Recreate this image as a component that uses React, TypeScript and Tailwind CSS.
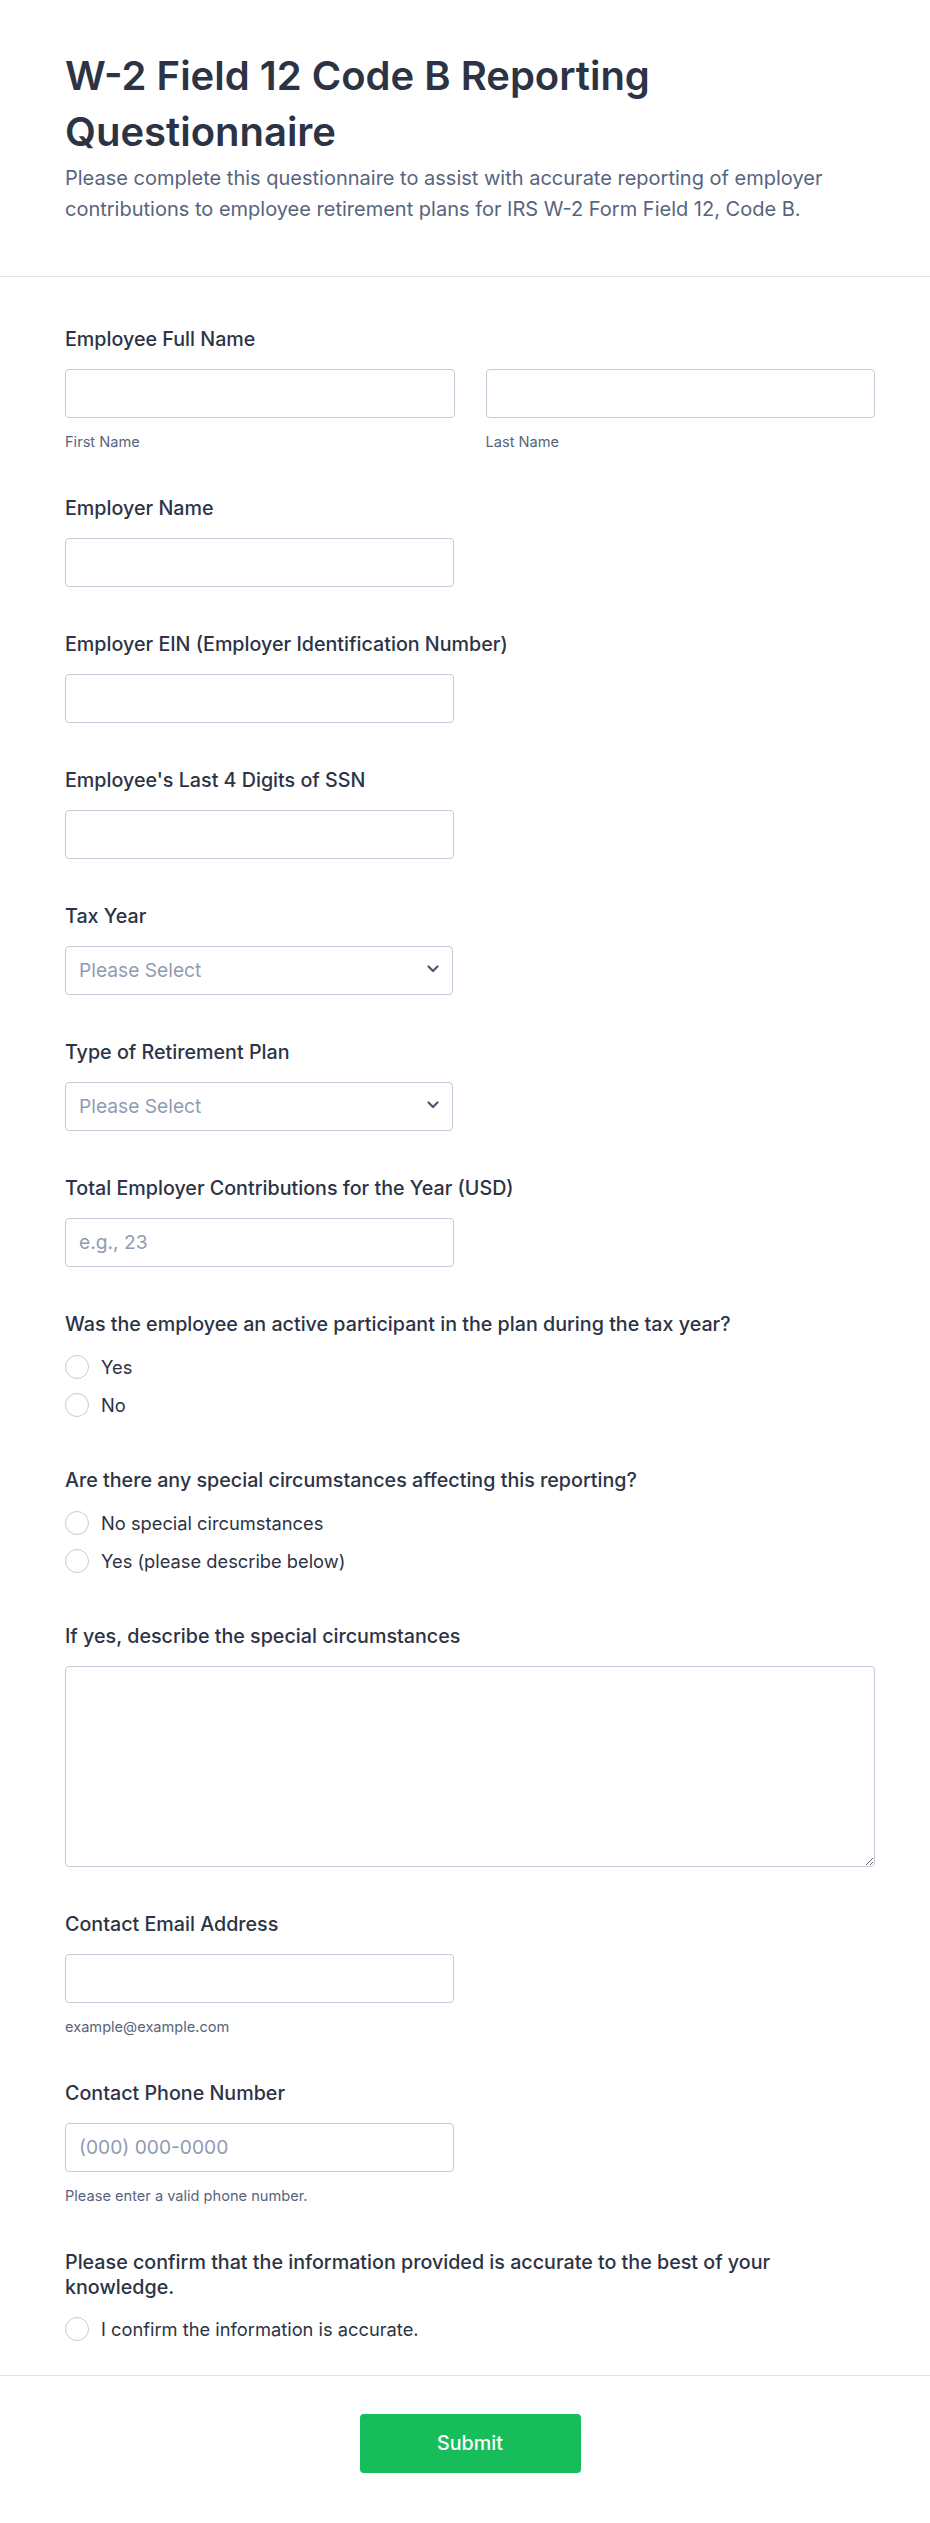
import React from "react";

const labelCls =
  "block text-[19.7px] leading-[24.5px] font-medium text-[#2c3345]";
const inputCls =
  "block h-[49px] rounded-[4px] border border-[#c3cad8] bg-white px-[13px] text-[19.2px] text-[#2c3345] placeholder:text-[#8f9bb3] outline-none";
const subCls = "mt-[15px] text-[14.6px] leading-[18px] text-[#57647e]";

function Label({ children }: { children: React.ReactNode }) {
  return <label className={labelCls}>{children}</label>;
}

function TextField({
  label,
  placeholder,
  sub,
}: {
  label: string;
  placeholder?: string;
  sub?: string;
}) {
  return (
    <div>
      <Label>{label}</Label>
      <input
        type="text"
        placeholder={placeholder}
        className={inputCls + " mt-[17px] w-[389px]"}
      />
      {sub && <div className={subCls}>{sub}</div>}
    </div>
  );
}

function SelectField({ label }: { label: string }) {
  return (
    <div>
      <Label>{label}</Label>
      <div className="relative mt-[17px] w-[388px]">
        <select
          className="block h-[49px] w-full appearance-none rounded-[4px] border border-[#c3cad8] bg-white pl-[13px] pr-10 text-[19.2px] text-[#8f9bb3] outline-none"
          defaultValue=""
        >
          <option value="">Please Select</option>
        </select>
        <svg
          className="pointer-events-none absolute right-[14px] top-[19px]"
          width="12"
          height="8"
          viewBox="0 0 12 8"
          fill="none"
        >
          <path
            d="M1.5 1.5L6 6L10.5 1.5"
            stroke="#4b5770"
            strokeWidth="2.2"
            strokeLinecap="round"
            strokeLinejoin="round"
          />
        </svg>
      </div>
    </div>
  );
}

function RadioGroup({
  label,
  options,
  name,
  labelWidth,
}: {
  label: string;
  options: string[];
  name: string;
  labelWidth?: string;
}) {
  return (
    <div className="pb-[6px]">
      <div className={labelCls + (labelWidth ? " " + labelWidth : "")}>
        {label}
      </div>
      <div className="mt-[18px] flex flex-col gap-[14px]">
        {options.map((o) => (
          <label key={o} className="flex items-center gap-[12px]">
            <input
              type="radio"
              name={name}
              className="m-0 h-6 w-6 shrink-0 appearance-none rounded-full border-[1.5px] border-[#c3cad8] bg-white"
            />
            <span className="text-[18.3px] leading-[24px] text-[#2c3345]">
              {o}
            </span>
          </label>
        ))}
      </div>
    </div>
  );
}

export default function App() {
  return (
    <div className="min-h-[2523px] bg-white font-['Inter',sans-serif] text-[#2c3345]">
      {/* Header */}
      <div className="border-b border-[#dfe2e8] pl-[65px] pr-[55px] pt-[48px] pb-[52px]">
        <h1 className="text-[40px] font-semibold leading-[56px] text-[#2c3345]">
          W-2 Field 12 Code B Reporting Questionnaire
        </h1>
        <p className="mt-[3px] text-[20px] leading-[30.6px] text-[#57647e]">
          Please complete this questionnaire to assist with accurate reporting of
          employer contributions to employee retirement plans for IRS W-2 Form
          Field 12, Code B.
        </p>
      </div>

      {/* Form */}
      <div className="flex flex-col gap-[45.5px] border-b border-[#dfe2e8] pl-[65px] pr-[55px] pt-[50px] pb-[34px]">
        <div>
          <Label>Employee Full Name</Label>
          <div className="mt-[17px] grid grid-cols-2 gap-x-[31px]">
            <div>
              <input type="text" className={inputCls + " w-full"} />
              <div className={subCls}>First Name</div>
            </div>
            <div>
              <input type="text" className={inputCls + " w-full"} />
              <div className={subCls}>Last Name</div>
            </div>
          </div>
        </div>

        <TextField label="Employer Name" />
        <TextField label="Employer EIN (Employer Identification Number)" />
        <TextField label="Employee's Last 4 Digits of SSN" />
        <SelectField label="Tax Year" />
        <SelectField label="Type of Retirement Plan" />
        <TextField
          label="Total Employer Contributions for the Year (USD)"
          placeholder="e.g., 23"
        />

        <RadioGroup
          name="active"
          label="Was the employee an active participant in the plan during the tax year?"
          options={["Yes", "No"]}
        />
        <RadioGroup
          name="special"
          label="Are there any special circumstances affecting this reporting?"
          options={["No special circumstances", "Yes (please describe below)"]}
        />

        <div>
          <Label>If yes, describe the special circumstances</Label>
          <textarea className="mt-[17px] block h-[201px] w-full rounded-[4px] border border-[#c3cad8] bg-white px-[13px] py-[10px] text-[18px] outline-none" />
        </div>

        <TextField label="Contact Email Address" sub="example@example.com" />
        <TextField
          label="Contact Phone Number"
          placeholder="(000) 000-0000"
          sub="Please enter a valid phone number."
        />

        <div className="-mb-[6px]">
          <RadioGroup
            name="confirm"
            label="Please confirm that the information provided is accurate to the best of your knowledge."
            labelWidth="max-w-[790px]"
            options={["I confirm the information is accurate."]}
          />
        </div>
      </div>

      {/* Submit */}
      <div className="flex justify-center pl-[65px] pr-[55px] pt-[38px] pb-[50px]">
        <button
          type="button"
          className="h-[59px] w-[221px] rounded-[4px] bg-[#18bd5b] text-[19.7px] font-medium text-white"
        >
          Submit
        </button>
      </div>
    </div>
  );
}
